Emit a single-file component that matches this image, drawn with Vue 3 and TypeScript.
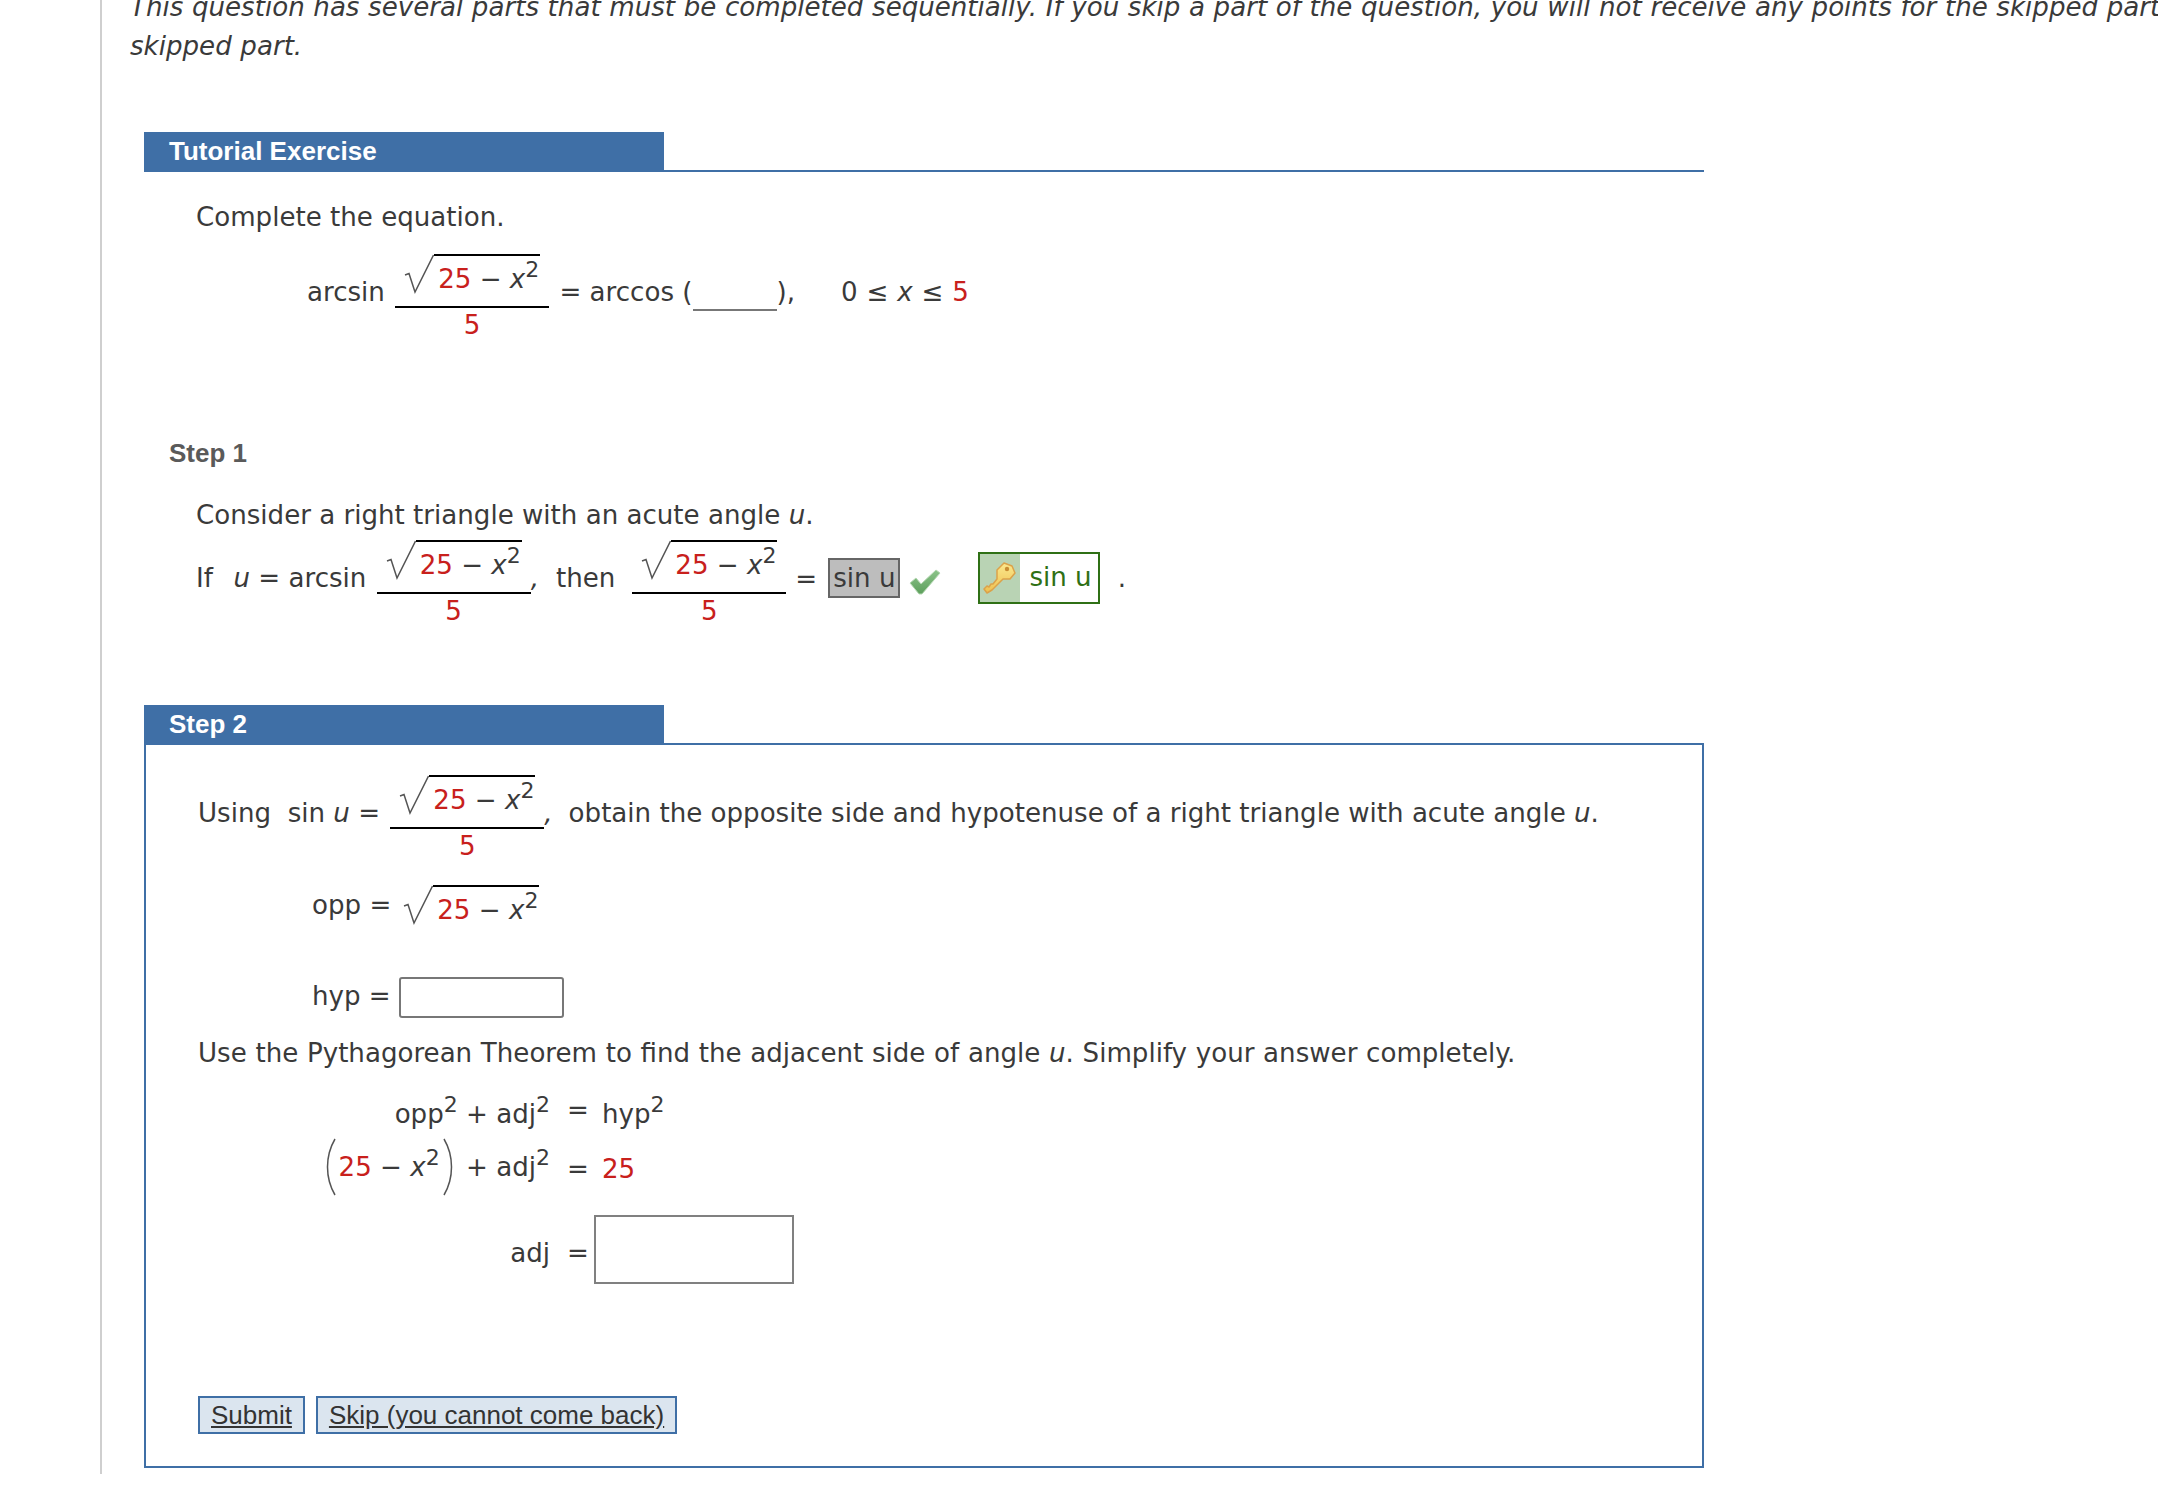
<script setup lang="ts">
const intro = 'This question has several parts that must be completed sequentially. If you skip a part of the question, you will not receive any points for the skipped part, and you will not be able to come back to the'
</script>

<template>
  <div class="page">
    <div class="content">
      <p class="intro">{{ intro }}<br />skipped part.</p>

      <section class="tutorial">
        <div class="head"><h2 class="tab">Tutorial Exercise</h2></div>
        <p class="para first">Complete the equation.</p>
        <div class="math eq1">
          arcsin
          <span class="frac">
            <span class="num"><span class="radical">
              <svg class="rad" width="30" height="40" viewBox="0 0 30 40"><path d="M1 21 L5 19.500 L11 38 L29.500 1" /></svg>
              <span class="radicand"><span class="red">25</span> − <i>x</i><sup>2</sup></span>
            </span></span>
            <span class="den red">5</span>
          </span>
          = arccos (<span class="blank"></span>),<span class="range">0 ≤ <i>x</i> ≤ <span class="red">5</span></span>
        </div>

        <h3 class="step">Step 1</h3>
        <p class="para consider">Consider a right triangle with an acute angle <i>u</i>.</p>
        <div class="math eq2">
          <span class="if">If</span>&nbsp; <i>u</i> = arcsin
          <span class="frac">
            <span class="num"><span class="radical">
              <svg class="rad" width="30" height="40" viewBox="0 0 30 40"><path d="M1 21 L5 19.500 L11 38 L29.500 1" /></svg>
              <span class="radicand"><span class="red">25</span> − <i>x</i><sup>2</sup></span>
            </span></span>
            <span class="den red">5</span>
          </span><span class="comma">,</span>
          <span class="then">then</span>
          <span class="frac">
            <span class="num"><span class="radical">
              <svg class="rad" width="30" height="40" viewBox="0 0 30 40"><path d="M1 21 L5 19.500 L11 38 L29.500 1" /></svg>
              <span class="radicand"><span class="red">25</span> − <i>x</i><sup>2</sup></span>
            </span></span>
            <span class="den red">5</span>
          </span>
          <span class="eqsign">=</span>
          <span class="given">sin u</span>
          <svg class="check" width="34" height="28" viewBox="0 0 34 28">
            <defs>
              <linearGradient id="chk" x1="0" y1="0" x2="0" y2="1">
                <stop offset="0" stop-color="#8cc48a" />
                <stop offset="1" stop-color="#5d9f5c" />
              </linearGradient>
            </defs>
            <path d="M2 15 L8 10 L13 16 L28 2 L32 5 L14 26 L11 26 Z" fill="url(#chk)" stroke="#b5d8b3" stroke-width="1" />
          </svg>
          <span class="answer">
            <span class="keycell">
              <svg width="34" height="34" viewBox="0 0 34 34">
                <defs>
                  <linearGradient id="keyg" x1="0" y1="0" x2="0" y2="1">
                    <stop offset="0" stop-color="#fbe88e" />
                    <stop offset="1" stop-color="#eec04f" />
                  </linearGradient>
                </defs>
                <path d="M21 2 L29 5 L32 12 L27 18 L20 18 L9 29 L4 32 L1 28 L4 25 L6 26 L8 23 L10 23 L14 18 L14 9 Z" fill="url(#keyg)" stroke="#dba24a" stroke-width="1.500" stroke-linejoin="round" />
                <circle cx="24" cy="8" r="2.200" fill="#c98d33" />
              </svg>
            </span>
            <span class="anstext">sin u</span>
          </span>
          <span class="period">.</span>
        </div>
      </section>

      <section class="step2">
        <div class="head"><h2 class="tab">Step 2</h2></div>
        <div class="box">
          <div class="math eq3">
            Using&nbsp; sin <i>u</i> =
            <span class="frac">
              <span class="num"><span class="radical">
                <svg class="rad" width="30" height="40" viewBox="0 0 30 40"><path d="M1 21 L5 19.500 L11 38 L29.500 1" /></svg>
                <span class="radicand"><span class="red">25</span> − <i>x</i><sup>2</sup></span>
              </span></span>
              <span class="den red">5</span>
            </span><span class="comma">,</span>
            <span class="obtain">obtain the opposite side and hypotenuse of a right triangle with acute angle <i>u</i>.</span>
          </div>
          <div class="math opp">
            <span class="lab">opp =</span>
            <span class="radical inline">
              <svg class="rad" width="30" height="40" viewBox="0 0 30 40"><path d="M1 21 L5 19.500 L11 38 L29.500 1" /></svg>
              <span class="radicand"><span class="red">25</span> − <i>x</i><sup>2</sup></span>
            </span>
          </div>
          <div class="math hyp">
            <span class="lab2">hyp =</span>
            <input class="field" type="text" />
          </div>
          <p class="para pyth">Use the Pythagorean Theorem to find the adjacent side of angle <i>u</i>. Simplify your answer completely.</p>
          <div class="align">
            <div class="lhs r1">opp<sup>2</sup> + adj<sup>2</sup></div>
            <div class="eqc">=</div>
            <div class="rhs r1">hyp<sup>2</sup></div>

            <div class="lhs second">
              <svg class="paren" width="16" height="58" viewBox="0 0 16 58"><path d="M13 1 C3 18 3 40 13 57" /></svg>
              <span class="red">25</span> − <i>x</i><sup>2</sup>
              <svg class="paren" width="16" height="58" viewBox="0 0 16 58"><path d="M3 1 C13 18 13 40 3 57" /></svg>
              + adj<sup>2</sup>
            </div>
            <div class="eqc low">=</div>
            <div class="rhs low red">25</div>

            <div class="lhs third">adj</div>
            <div class="eqc third">=</div>
            <div class="thirdinput"><input class="field big" type="text" /></div>
          </div>
          <div class="actions">
            <button class="btn" type="button">Submit</button>
            <button class="btn" type="button">Skip (you cannot come back)</button>
          </div>
        </div>
      </section>
    </div>
  </div>
</template>

<style>
html, body { margin: 0; background: #fff; overflow: hidden; }
</style>

<style scoped>
.page {
  width: 2158px;
  height: 1486px;
  overflow: hidden;
  box-sizing: border-box;
  padding-left: 100px;
  font-family: "DejaVu Sans", sans-serif;
  font-size: 26.1px;
  color: #3a3a3a;
}
.content {
  border-left: 2px solid #cfcfcf;
  height: 1486px;
  padding-left: 28px;
  box-sizing: border-box;
}
.intro {
  margin: -12px 0 0;
  font-style: italic;
  line-height: 39px;
  white-space: nowrap;
  word-spacing: 0.35px;
}
.tutorial { margin: 66px 0 0 14px; width: 1560px; }
.head { border-bottom: 2px solid #3f6fa6; height: 38px; }
.tab {
  margin: 0;
  width: 520px;
  height: 40px;
  box-sizing: border-box;
  padding-left: 25px;
  background: #3f6fa6;
  color: #fff;
  font: bold 26px/38px "Liberation Sans", sans-serif;
}
.para { margin: 0; line-height: 40px; }
.para.first { margin: 25px 0 0 52px; }
.red { color: #c8201c; }
sup { font-size: 22px; line-height: 0; vertical-align: 11px; }
.math { white-space: nowrap; }
.frac {
  display: inline-block;
  width: 154px;
  vertical-align: -33px;
  text-align: center;
  margin: 0 2px;
}
.num {
  display: block;
  height: 52px;
  border-bottom: 2px solid #000;
}
.den { display: block; line-height: 34px; }
.radical {
  display: flex;
  justify-content: center;
  align-items: flex-start;
  height: 52px;
}
.radical.inline { display: inline-flex; vertical-align: -11px; height: 46px; margin-left: 4px; }
.radicand {
  display: block;
  height: 50px;
  width: 106px;
  text-align: left;
  padding-left: 4px;
  box-sizing: border-box;
  border-top: 2px solid #000;
  line-height: 46px;
  white-space: nowrap;
}
.inline .radicand { line-height: 47px; }
.rad path, .paren path { fill: none; stroke: #555; stroke-width: 1.500; }
.eq1 { margin: 17px 0 0 163px; line-height: 40px; }
.blank {
  display: inline-block;
  width: 84px;
  border-bottom: 2px solid #777;
  vertical-align: -10px;
}
.range { margin-left: 46px; word-spacing: 0.6px; }
.step {
  margin: 91px 0 0 25px;
  font: bold 26px/40px "Liberation Sans", sans-serif;
  color: #5a5a5a;
}
.consider { margin: 22px 0 0 52px; }
.eq2 { margin: 5px 0 0 52px; line-height: 40px; }
.if { margin-right: 4px; }
.comma { font-style: italic; margin-left: -2px; }
.then { margin: 0 15px 0 17px; }
.eqsign { margin: 0 11px 0 7px; position: relative; top: 1px; }
.given {
  display: inline-block;
  background: #bdbdbd;
  border: 2px solid #666;
  padding: 0 3px;
  line-height: 36px;
  vertical-align: 0;
}
.check { margin: 0 36px 0 8px; vertical-align: -9px; }
.answer {
  display: inline-flex;
  border: 2px solid #2f7015;
  vertical-align: -8px;
  height: 48px;
  line-height: 46px;
}
.keycell {
  width: 40px;
  background: #b9d3b4;
  display: flex;
  align-items: center;
  justify-content: center;
}
.anstext { color: #2f7015; padding: 0 6px 0 9px; }
.period { margin-left: 18px; }
.step2 { margin: 77px 0 0 14px; width: 1560px; }
.box {
  min-height: 723px;
  box-sizing: border-box;
  border: 2px solid #3f6fa6;
  border-top: 0;
  padding: 30px 0 0 52px;
}
.eq3 { line-height: 40px; }
.obtain { margin-left: 16px; }
.opp, .hyp { margin-left: 114px; }
.opp { margin-top: 22px; line-height: 40px; }
.lab { margin-right: 8px; }
.lab2 { margin-right: 8px; }
.hyp { margin-top: 45px; line-height: 40px; }
.field {
  width: 165px;
  height: 41px;
  box-sizing: border-box;
  border: 2px solid #777;
  border-radius: 3px;
  vertical-align: middle;
  background: #fff;
  padding: 0;
  margin: 0;
}
.pyth { margin-top: 15px; word-spacing: 0.4px; }
.align {
  display: grid;
  grid-template-columns: 352px 44px 1fr;
  margin-top: 17px;
  line-height: 40px;
}
.lhs { text-align: right; white-space: nowrap; }
.eqc { padding-left: 17px; }
.rhs { padding-left: 8px; }
.r1 { padding-top: 4px; }
.second { line-height: 40px; margin-top: 4px; }
.paren { vertical-align: -20px; margin: 0 1px; }
.low { padding-top: 15px; }
.third { padding-top: 37px; }
.big { width: 200px; height: 69px; border-radius: 0; border-color: #808080; vertical-align: top; }
.thirdinput { padding-top: 19px; }
.actions { margin-top: 112px; display: flex; gap: 11px; }
.btn {
  height: 38px;
  padding: 0 11px;
  box-sizing: border-box;
  background: #dbe5ef;
  border: 2px solid #3f6fa6;
  border-radius: 0;
  color: #333;
  font: 26px/32px "Liberation Sans", sans-serif;
  text-decoration: underline;
}
</style>
